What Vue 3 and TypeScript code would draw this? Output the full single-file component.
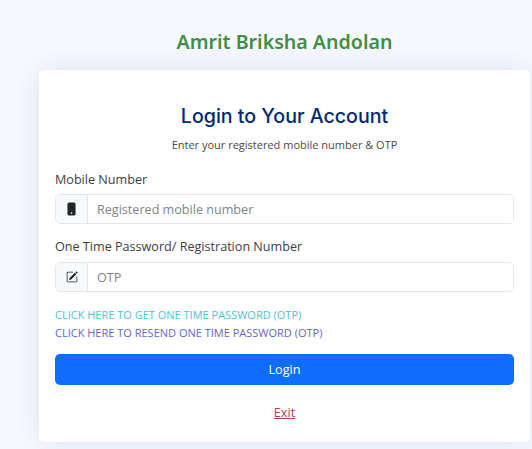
<script setup lang="ts">
const getOtp = "CLICK HERE TO GET ONE TIME PASSWORD (OTP)";
const resendOtp = "CLICK HERE TO RESEND ONE TIME PASSWORD (OTP)";
</script>

<template>
  <main class="page">
    <h1 class="brand">Amrit Briksha Andolan</h1>
    <section class="card">
      <h2 class="title">Login to Your Account</h2>
      <p class="sub">Enter your registered mobile number &amp; OTP</p>
      <label class="label">Mobile Number</label>
      <div class="group first">
        <span class="addon">
          <svg width="13" height="14" viewBox="0 0 16 16" fill="#212529"><path d="M3 2a2 2 0 0 1 2-2h6a2 2 0 0 1 2 2v12a2 2 0 0 1-2 2H5a2 2 0 0 1-2-2V2zm6 11a1 1 0 1 0-2 0 1 1 0 0 0 2 0z"/></svg>
        </span>
        <input class="field" placeholder="Registered mobile number" />
      </div>
      <label class="label second">One Time Password/ Registration Number</label>
      <div class="group">
        <span class="addon">
          <svg width="12" height="12" viewBox="0 0 16 16" fill="#212529"><path d="M15.502 1.94a.5.5 0 0 1 0 .706L14.459 3.69l-2-2L13.502.646a.5.5 0 0 1 .707 0l1.293 1.293zm-1.75 2.456-2-2L4.939 9.21a.5.5 0 0 0-.121.196l-.805 2.414a.25.25 0 0 0 .316.316l2.414-.805a.5.5 0 0 0 .196-.12l6.813-6.814z"/><path fill-rule="evenodd" d="M1 13.5A1.5 1.5 0 0 0 2.5 15h11a1.5 1.5 0 0 0 1.5-1.5v-6a.5.5 0 0 0-1 0v6a.5.5 0 0 1-.5.5h-11a.5.5 0 0 1-.5-.5v-11a.5.5 0 0 1 .5-.5H9a.5.5 0 0 0 0-1H2.5A1.5 1.5 0 0 0 1 2.5v11z"/></svg>
        </span>
        <input class="field" placeholder="OTP" />
      </div>
      <a class="otp get">{{ getOtp }}</a>
      <a class="otp resend">{{ resendOtp }}</a>
      <button class="login" type="button">Login</button>
      <a class="exit">Exit</a>
    </section>
  </main>
</template>

<style>
html, body { margin: 0; background: #f6f9ff; }
</style>

<style scoped>
.page {
  height: 449px;
  overflow: hidden;
  box-sizing: border-box;
  padding: 27px 2px 0 39px;
  font-family: "Open Sans", "Liberation Sans", sans-serif;
  color: #212529;
}
.brand {
  margin: 0 0 14px;
  text-align: center;
  font-family: "Noto Sans", "Open Sans", sans-serif;
  font-size: 19.6px;
  line-height: 29px;
  font-weight: 600;
  color: #3f8f47;
}
.card {
  display: flex;
  flex-direction: column;
  box-sizing: border-box;
  height: 372px;
  padding: 33px 16px 0;
  background: #fff;
  border-radius: 5px;
  box-shadow: 0 0 30px rgba(1, 41, 112, 0.1);
}
.title {
  margin: 0;
  text-align: center;
  font-family: Inter, "Open Sans", sans-serif;
  font-size: 19.6px;
  line-height: 26px;
  font-weight: 500;
  color: #012970;
}
.sub {
  margin: 7px 0 0;
  text-align: center;
  font-size: 11px;
  line-height: 17px;
  color: #4a4a4a;
}
.label {
  margin-top: 17px;
  font-size: 12.6px;
  line-height: 19px;
  color: #3a3f44;
}
.label.second { margin-top: 13px; }
.group {
  display: flex;
  height: 30px;
  margin-top: 6px;
  border: 1px solid #e3e6ea;
  border-radius: 5px;
  box-sizing: border-box;
  overflow: hidden;
}
.group.first { margin-top: 5px; }
.addon {
  width: 31px;
  flex: none;
  display: flex;
  align-items: center;
  justify-content: center;
  background: #f8f9fa;
  border-right: 1px solid #e3e6ea;
}
.field {
  flex: 1;
  min-width: 0;
  border: 0;
  outline: 0;
  padding: 0 9px;
  font-family: inherit;
  font-size: 12.6px;
  background: #fff;
}
.field::placeholder { color: #7d858c; opacity: 1; }
.otp {
  font-size: 11px;
  line-height: 15px;
}
.get { margin-top: 15px; color: #4fc3d2; }
.resend { margin-top: 3px; color: #6468c6; }
.login {
  height: 31px;
  margin-top: 14px;
  border: 0;
  border-radius: 5px;
  background: #0d6efd;
  color: #fff;
  font-family: inherit;
  font-size: 12.6px;
}
.exit {
  margin-top: 18px;
  align-self: center;
  font-size: 12.6px;
  line-height: 19px;
  color: #b5404c;
  text-decoration: underline;
}
</style>
